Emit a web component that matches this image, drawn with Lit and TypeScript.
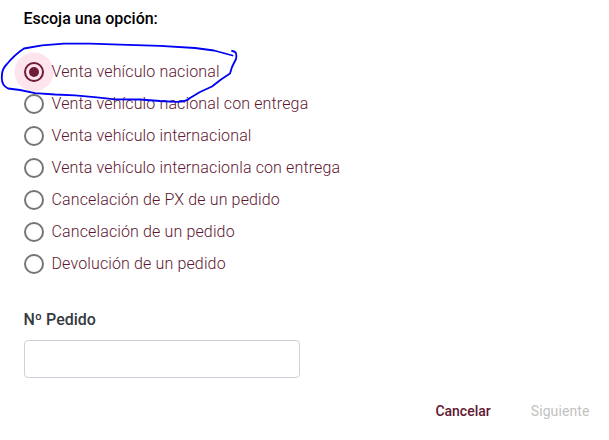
import { LitElement, html, css } from "lit";
import { customElement, property, state } from "lit/decorators.js";
import { classMap } from "lit/directives/class-map.js";

@customElement("radio-option")
class RadioOption extends LitElement {
  @property() label = "";
  @property({ type: Boolean }) checked = false;

  static styles = css`
    :host { display: block; }
    .row { display: flex; align-items: center; gap: 7.5px; height: 32px; cursor: pointer; }
    .ring {
      display: flex; align-items: center; justify-content: center; flex: none;
      box-sizing: border-box; width: 20px; height: 20px;
      border: 2px solid #757575; border-radius: 50%;
    }
    .ring.on { border-color: #701b37; box-shadow: 0 0 0 9.5px #fee5ed; background: #fee5ed; }
    .dot { width: 10px; height: 10px; border-radius: 50%; background: #701b37; }
    .text { font-size: 16px; font-weight: 300; line-height: 24px; color: #5e1730; white-space: nowrap; letter-spacing: 0.135px; }
  `;

  render() {
    return html`<div class="row" role="radio" aria-checked=${this.checked}>
      <span class=${classMap({ ring: true, on: this.checked })}>
        ${this.checked ? html`<span class="dot"></span>` : null}
      </span>
      <span class="text">${this.label}</span>
    </div>`;
  }
}

@customElement("app-root")
class AppRoot extends LitElement {
  @state() private selected = 0;

  private options = [
    "Venta vehículo nacional",
    "Venta vehículo nacional con entrega",
    "Venta vehículo internacional",
    "Venta vehículo internacionla con entrega",
    "Cancelación de PX de un pedido",
    "Cancelación de un pedido",
    "Devolución de un pedido",
  ];

  static styles = css`
    :host {
      display: block; position: relative; box-sizing: border-box;
      width: 609px; height: 440px; padding: 7px 19.5px 0 24px;
      overflow: hidden; background: #fff;
      font-family: Roboto, "Liberation Sans", sans-serif;
    }
    .title { margin-left: -0.6px; font-size: 16px; font-weight: 500; line-height: 24px; color: #000; }
    .options { margin-top: 25px; }
    .label { display: block; margin: 28px 0 0 -0.6px; font-size: 16px; font-weight: 500; line-height: 24px; color: #343a40; }
    .field {
      display: block; box-sizing: border-box; width: 276px; height: 38px; margin-top: 8px;
      border: 1px solid #ced0da; border-radius: 4px; background: #fff; outline: none; padding: 0 12px;
    }
    .actions { display: flex; justify-content: flex-end; gap: 40px; margin-top: 23px; }
    .action { border: 0; padding: 0; background: none; font: 500 14px/20px Roboto, sans-serif; color: #5e1730; }
    .action:disabled { color: #c2c2c2; font-weight: 400; letter-spacing: 0.1px; }
    .ink { position: absolute; left: 0; top: 0; pointer-events: none; }
  `;

  render() {
    return html`
      <div class="title">Escoja una opción:</div>
      <div class="options" role="radiogroup">
        ${this.options.map(
          (label, i) => html`<radio-option
            .label=${label}
            .checked=${i === this.selected}
            @click=${() => (this.selected = i)}
          ></radio-option>`
        )}
      </div>
      <label class="label" for="order">Nº Pedido</label>
      <input id="order" class="field" type="text" />
      <div class="actions">
        <button class="action">Cancelar</button>
        <button class="action" disabled>Siguiente</button>
      </div>
      <svg class="ink" width="250" height="120" viewBox="0 0 250 120" fill="none" stroke="#0000f5"
        stroke-width="1.8" stroke-linecap="round" stroke-linejoin="round">
        <path d="M232.5 55.5L214 50.5L195 48L160 45.8L120 44.7L90 43.7H64L42 45.3L24 48.5C17 53 12 58 7 64C3 68 2 71 2 75C1 82 3 86 8 88.5L20 90L35 93.2L55 94.5L75 95.3L97 97.3L115 99.3L140 99.5L160 101L176 101.8C184 102 187 101 190 98L200 92L212 86.5L221 79.5L230 73.5L232 67L236 59C237 54 236 51 232 51"/>
      </svg>
    `;
  }
}
